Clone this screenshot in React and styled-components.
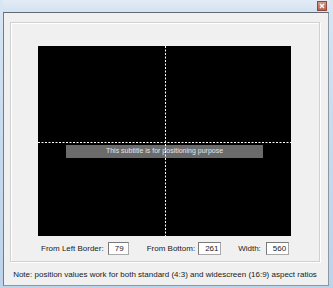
import React from "react";
import styled, { createGlobalStyle } from "styled-components";

const Global = createGlobalStyle`
  html, body { margin: 0; padding: 0; }
  body { width: 333px; height: 288px; overflow: hidden; font-family: "Liberation Sans", Arial, sans-serif; }
`;

const Frame = styled.div`
  width: 333px;
  height: 288px;
  box-sizing: border-box;
  background: linear-gradient(180deg, #d9e6f3 0%, #c9dcef 40%, #bcd3ea 100%);
  padding: 0 4px 2px 3px;
  display: flex;
  flex-direction: column;
`;

const TitleBar = styled.div`
  height: 12px;
  display: flex;
  justify-content: flex-end;
  align-items: flex-start;
  padding-right: 2px;
  background: linear-gradient(180deg, #e3ecf6, #d3e2f1);
`;

const CloseBtn = styled.div`
  width: 10px;
  height: 10px;
  margin-top: 1px;
  background: linear-gradient(180deg, #d99a88, #b9604b);
  border: 1px solid #8d4a3c;
  box-sizing: border-box;
  display: flex;
  align-items: center;
  justify-content: center;
`;

const Dialog = styled.div`
  flex: 1;
  background: #f0f0f0;
  border-top: 1px solid #5f6a75;
  border-left: 1px solid #707b86;
  border-right: 1px solid #8b97a3;
  border-bottom: 1px solid #8b97a3;
  display: flex;
  flex-direction: column;
  padding: 9px 8px 0 6px;
`;

const Group = styled.div`
  border: 1px solid #d0d0d0;
  box-shadow: inset 1px 1px 0 #ffffff, 1px 1px 0 #ffffff;
  padding: 23px 0 6px 27px;
  display: flex;
  flex-direction: column;
`;

const Preview = styled.div`
  position: relative;
  width: 253px;
  height: 190px;
  background: #000;
`;

const Guides = styled.svg`
  position: absolute;
  inset: 0;
  z-index: 2;
`;

const Subtitle = styled.div`
  position: absolute;
  left: 28px;
  top: 99px;
  width: 197px;
  height: 13px;
  background: #6b6b6b;
  color: #e6e6e6;
  font-size: 7px;
  line-height: 12px;
  text-align: center;
  z-index: 1;
`;

const Controls = styled.div`
  display: flex;
  align-items: center;
  margin-top: 6px;
  margin-left: 3px;
  font-size: 8px;
  color: #1a1a1a;
`;

const Label = styled.span`
  margin-right: ${(p) => p.$gap}px;
`;

const Field = styled.div`
  width: ${(p) => p.$w}px;
  height: 13px;
  box-sizing: border-box;
  background: #fff;
  border: 1px solid #a9a9a9;
  border-top-color: #7a7a7a;
  border-left-color: #7a7a7a;
  padding-left: 6px;
  line-height: 12px;
  margin-right: ${(p) => p.$after}px;
`;

const Note = styled.div`
  font-size: 8px;
  color: #1a1a1a;
  text-align: center;
  margin-top: 8px;
`;

export default function App() {
  return (
    <>
      <Global />
      <Frame>
        <TitleBar>
          <CloseBtn>
            <svg width="6" height="6" viewBox="0 0 6 6">
              <path d="M1 1L5 5M5 1L1 5" stroke="#fff" strokeWidth="1.4" />
            </svg>
          </CloseBtn>
        </TitleBar>
        <Dialog>
          <Group>
            <Preview>
              <Subtitle>This subtitle is for positioning purpose</Subtitle>
              <Guides width="253" height="190">
                <line x1="127.5" y1="0" x2="127.5" y2="190" stroke="#fff" strokeDasharray="2 1.5" />
                <line x1="0" y1="96.5" x2="253" y2="96.5" stroke="#fff" strokeDasharray="2 1.5" />
              </Guides>
            </Preview>
            <Controls>
              <Label $gap={4}>From Left Border:</Label>
              <Field $w={21} $after={18}>79</Field>
              <Label $gap={3}>From Bottom:</Label>
              <Field $w={23} $after={17}>261</Field>
              <Label $gap={5}>Width:</Label>
              <Field $w={23} $after={0}>560</Field>
            </Controls>
          </Group>
          <Note>Note: position values work for both standard (4:3) and widescreen (16:9) aspect ratios</Note>
        </Dialog>
      </Frame>
    </>
  );
}
